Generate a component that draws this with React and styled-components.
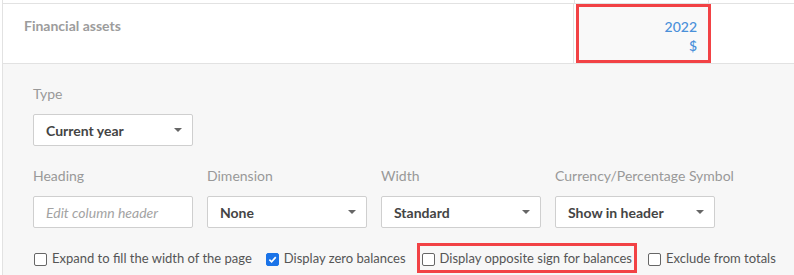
import React from 'react';
import styled, { createGlobalStyle } from 'styled-components';

const GlobalStyle = createGlobalStyle`
    body {
        margin: 0;
        background: #fff;
        font-family: Lato, "Open Sans", sans-serif;
    }
`;

const Frame = styled.div`
    margin-left: 2px;
    border-left: 1px solid #e2e2e2;
    height: 275px;
    display: flex;
    flex-direction: column;
    overflow: hidden;
`;

const StubRow = styled.div`
    display: flex;
    flex: none;
    height: 3px;
    border-bottom: 1px solid #e2e2e2;
`;

const StubCell = styled.div`
    width: ${props => props.width ? props.width + 'px' : 'auto'};
    flex: ${props => props.width ? 'none' : 1};
    border-right: ${props => props.divider ? '1px solid #e2e2e2' : 'none'};
`;

const HeaderRow = styled.div`
    display: flex;
    flex: none;
    height: 59px;
    border-bottom: 1px solid #e2e2e2;
    background: #fff;
`;

const LabelCell = styled.div`
    width: 571px;
    flex: none;
    border-right: 1px solid #e2e2e2;
    padding: 13px 0 0 21px;
    box-sizing: border-box;
    font-size: 14px;
    font-weight: 700;
    color: #9c9c9c;
`;

const ColumnHead = styled.div`
    width: 129px;
    flex: none;
    margin: 3px 0 0 5px;
    height: 53px;
    background: #f9f9f9;
    outline: 3px solid #f24245;
    box-sizing: border-box;
    padding: 10px 11px 0 0;
    text-align: right;
    color: #4a90d9;
    font-size: 14px;
    font-weight: 500;
    line-height: 19px;
`;

const Panel = styled.div`
    flex: 1;
    background: #f7f7f7;
    padding: 21px 0 0 30px;
    box-sizing: border-box;
`;

const FieldLabel = styled.div`
    font-size: 14px;
    color: #999;
    line-height: 18px;
    margin-bottom: 11px;
    white-space: nowrap;
`;

const Grid = styled.div`
    display: grid;
    grid-template-columns: repeat(4, 160px);
    column-gap: 14px;
    margin-top: 21px;
`;

const Field = styled.div`
    display: flex;
    flex-direction: column;
`;

const Select = styled.div`
    width: 160px;
    height: 32px;
    box-sizing: border-box;
    border: 1px solid #cfcfcf;
    border-radius: 2px;
    background: #fff;
    display: flex;
    align-items: center;
    justify-content: space-between;
    padding: 0 10px 0 12px;
    font-size: 14px;
    font-weight: 700;
    color: #444;
`;

const Caret = styled.span`
    width: 0;
    height: 0;
    border-left: 4px solid transparent;
    border-right: 4px solid transparent;
    border-top: 4px solid #666;
`;

const TextInput = styled.input`
    width: 160px;
    height: 32px;
    box-sizing: border-box;
    border: 1px solid #cfcfcf;
    border-radius: 2px;
    background: #fff;
    padding: 0 12px;
    font-family: Lato, sans-serif;
    font-size: 14px;
    outline: none;

    &::placeholder {
        color: #a3a3a3;
        font-style: italic;
    }
`;

const Options = styled.div`
    display: flex;
    align-items: center;
    margin-top: 20px;
    gap: 14px;
    padding-left: 1px;
`;

const Option = styled.label`
    display: flex;
    align-items: center;
    gap: 5px;
    font-size: 13px;
    color: #555;
    height: 20px;
    outline: ${props => props.highlight ? '3px solid #f24245' : 'none'};
    outline-offset: 2px;
    margin: ${props => props.highlight ? '0 2px' : '0'};
`;

const Box = styled.span`
    width: 13px;
    height: 13px;
    box-sizing: border-box;
    border-radius: 2px;
    border: 1px solid ${props => props.checked ? '#1a73e8' : '#666'};
    background: ${props => props.checked ? '#1a73e8' : '#fff'};
    display: flex;
    align-items: center;
    justify-content: center;
    margin-top: 2px;
`;

const Checkbox = ({ checked }) => (
    <Box checked={checked}>
        {checked && (
            <svg width="9" height="9" viewBox="0 0 10 10">
                <path d="M1.5 5.2 L4 7.6 L8.6 2.4" stroke="#fff" strokeWidth="1.8" fill="none" />
            </svg>
        )}
    </Box>
);

const DropDown = ({ value }) => (
    <Select>
        {value}
        <Caret />
    </Select>
);

const App = () => (
    <>
        <GlobalStyle />
        <Frame>
            <StubRow>
                <StubCell width={571} divider />
                <StubCell width={133} divider />
                <StubCell />
            </StubRow>
            <HeaderRow>
                <LabelCell>Financial assets</LabelCell>
                <ColumnHead>
                    <div>2022</div>
                    <div>$</div>
                </ColumnHead>
            </HeaderRow>
            <Panel>
                <Field>
                    <FieldLabel>Type</FieldLabel>
                    <DropDown value="Current year" />
                </Field>
                <Grid>
                    <Field>
                        <FieldLabel>Heading</FieldLabel>
                        <TextInput placeholder="Edit column header" />
                    </Field>
                    <Field>
                        <FieldLabel>Dimension</FieldLabel>
                        <DropDown value="None" />
                    </Field>
                    <Field>
                        <FieldLabel>Width</FieldLabel>
                        <DropDown value="Standard" />
                    </Field>
                    <Field>
                        <FieldLabel>Currency/Percentage Symbol</FieldLabel>
                        <DropDown value="Show in header" />
                    </Field>
                </Grid>
                <Options>
                    <Option><Checkbox />Expand to fill the width of the page</Option>
                    <Option><Checkbox checked />Display zero balances</Option>
                    <Option highlight><Checkbox />Display opposite sign for balances</Option>
                    <Option><Checkbox />Exclude from totals</Option>
                </Options>
            </Panel>
        </Frame>
    </>
);

export default App;
